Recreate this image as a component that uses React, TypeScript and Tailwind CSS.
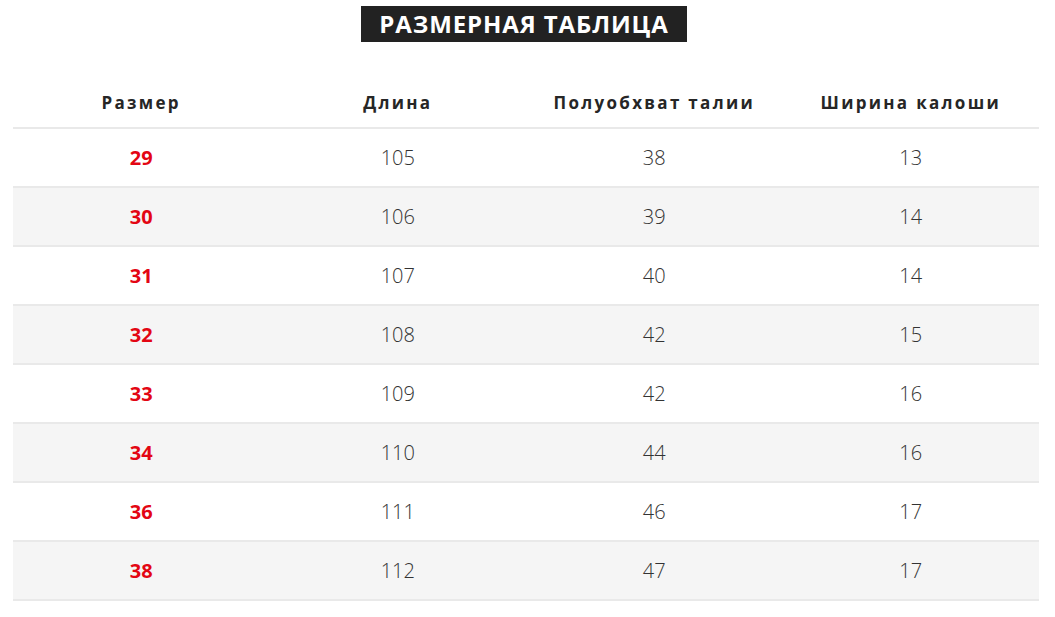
import React from "react";

const rows = [
  ["29", "105", "38", "13"],
  ["30", "106", "39", "14"],
  ["31", "107", "40", "14"],
  ["32", "108", "42", "15"],
  ["33", "109", "42", "16"],
  ["34", "110", "44", "16"],
  ["36", "111", "46", "17"],
  ["38", "112", "47", "17"],
];

const headers = ["Размер", "Длина", "Полуобхват талии", "Ширина калоши"];

export default function App() {
  return (
    <div className="min-h-screen bg-white font-['Open_Sans',sans-serif]">
      <div className="flex justify-center pt-[6px]">
        <h1 className="mr-[7px] w-[326px] h-[36px] flex items-center justify-center bg-[#222222] text-white text-[24px] font-bold uppercase tracking-[0.9px]">
          Размерная таблица
        </h1>
      </div>

      <div className="mx-[13px] mt-[36px] w-[1026px]">
        <div className="grid grid-cols-4 h-[51px] border-b-2 border-[#e9e9e9]">
          {headers.map((h) => (
            <div key={h} className="flex items-center justify-center text-[17px] font-bold tracking-[2.3px] text-[#262626]">
              {h}
            </div>
          ))}
        </div>

        {rows.map((r, i) => (
          <div
            key={r[0]}
            className={`grid grid-cols-4 h-[59px] border-b-2 border-[#e9e9e9] ${i % 2 === 1 ? "bg-[#f5f5f5]" : "bg-white"}`}
          >
            {r.map((v, j) => (
              <div
                key={j}
                className={`flex items-center justify-center text-[20px] ${j === 0 ? "font-bold text-[#e30613]" : "font-light text-[#333333]"}`}
              >
                {v}
              </div>
            ))}
          </div>
        ))}
      </div>
    </div>
  );
}
